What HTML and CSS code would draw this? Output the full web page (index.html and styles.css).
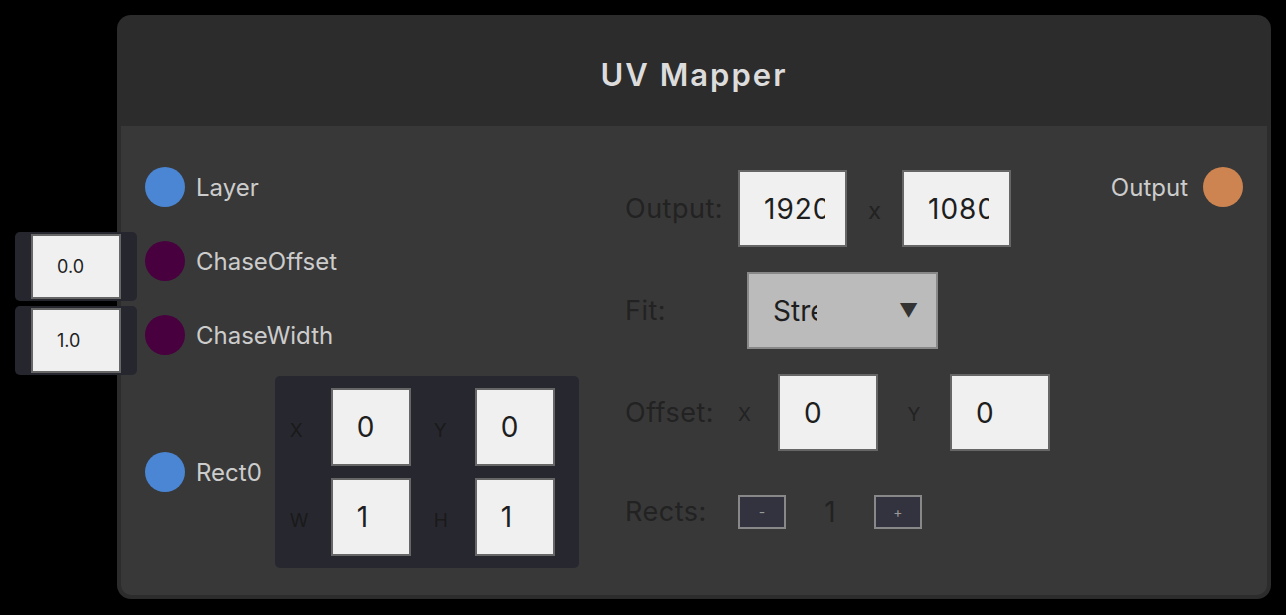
FILE: index.html
```html
<!DOCTYPE html>
<html>
<head>
<meta charset="utf-8">
<link rel="stylesheet" href="styles.css">
</head>
<body>
<div class="node">
  <div class="header"><span class="title">UV Mapper</span></div>
  <div class="nbody">
    <div class="ports">
      <div class="port"><span class="dot blue"></span><span class="plabel">Layer</span></div>
      <div class="port"><span class="dot purple"></span><span class="plabel">ChaseOffset</span></div>
      <div class="port"><span class="dot purple"></span><span class="plabel">ChaseWidth</span></div>
      <div class="port rectrow">
        <span class="dot blue"></span><span class="plabel">Rect0</span>
        <div class="rectgrid">
          <span class="glabel">X</span><div class="field gfield"><span class="val">0</span></div>
          <span class="glabel g2">Y</span><div class="field gfield"><span class="val">0</span></div>
          <span class="glabel">W</span><div class="field gfield"><span class="val">1</span></div>
          <span class="glabel g2">H</span><div class="field gfield"><span class="val">1</span></div>
        </div>
      </div>
    </div>
    <div class="controls">
      <div class="crow">
        <span class="clabel">Output:</span>
        <div class="field wide"><span class="val">1920</span></div>
        <span class="times">x</span>
        <div class="field wide"><span class="val">1080</span></div>
      </div>
      <div class="crow">
        <span class="clabel">Fit:</span>
        <div class="select"><span class="stext">Stretch</span><span class="arrow">▼</span></div>
      </div>
      <div class="crow">
        <span class="clabel">Offset:</span>
        <span class="axis axx">X</span>
        <div class="field mid"><span class="val">0</span></div>
        <span class="axis axy">Y</span>
        <div class="field mid"><span class="val">0</span></div>
      </div>
      <div class="crow rects">
        <span class="clabel">Rects:</span>
        <span class="btn">-</span>
        <span class="count">1</span>
        <span class="btn">+</span>
      </div>
    </div>
    <div class="outs">
      <div class="port outport"><span class="plabel">Output</span><span class="dot orange"></span></div>
    </div>
  </div>
  <div class="side s1"><div class="field small"><span class="val">0.0</span></div></div>
  <div class="side s2"><div class="field small"><span class="val">1.0</span></div></div>
</div>
</body>
</html>
```
FILE: styles.css
```css
html, body {
  margin: 0;
  padding: 0;
  background: #000;
  font-family: Inter, "Noto Sans", sans-serif;
}
body {
  padding: 15px 0 0 117px;
  height: 615px;
  box-sizing: border-box;
}
.node {
  position: relative;
  width: 1154px;
  height: 584px;
  box-sizing: border-box;
  background: #2c2c2c;
  border-radius: 14px;
  padding: 0 4px 4px 4px;
  display: flex;
  flex-direction: column;
}
.header {
  flex: none;
  height: 111px;
  display: flex;
  align-items: center;
  justify-content: center;
  padding-top: 8px;
  box-sizing: border-box;
}
.title {
  color: #dcdcdc;
  font-size: 31px;
  font-weight: 600;
  letter-spacing: 2px;
}
.nbody {
  flex: 1;
  min-height: 0;
  background: #383838;
  border-radius: 0 0 10px 10px;
  display: grid;
  grid-template-columns: 480px 1fr auto;
  align-items: start;
  padding: 41px 24px 0 24px;
}
.ports {
  display: flex;
  flex-direction: column;
}
.port {
  display: flex;
  align-items: center;
  height: 40px;
  margin-bottom: 34px;
}
.dot {
  width: 40px;
  height: 40px;
  border-radius: 50%;
  flex: none;
}
.blue { background: #4a86d4; }
.purple { background: #48003f; }
.orange { background: #cd8450; }
.plabel {
  color: #cccccc;
  font-size: 24px;
  margin-left: 11px;
}
.rectrow {
  height: 192px;
  margin-top: -13px;
}
.rectgrid {
  margin-left: 13px;
  background: #27272f;
  border-radius: 5px;
  display: grid;
  grid-template-columns: 41px 80px 64px 80px;
  grid-template-rows: 78px 78px;
  row-gap: 12px;
  padding: 12px 24px 12px 15px;
  align-items: center;
}
.glabel {
  color: #1a1a1a;
  font-size: 19px;
  padding-top: 6px;
}
.g2 { padding-left: 23px; }
.field {
  box-sizing: border-box;
  background: #f0f0f0;
  border: 2px solid #666;
  color: #1e1e1e;
  font-size: 28px;
  letter-spacing: 1px;
  padding: 0 20px 0 24px;
  display: flex;
  align-items: center;
}
.val {
  display: block;
  overflow: hidden;
  white-space: nowrap;
  flex: 1;
}
.gfield {
  width: 80px;
  height: 78px;
}
.controls {
  display: flex;
  flex-direction: column;
  padding-top: 3px;
}
.crow {
  display: flex;
  align-items: center;
  height: 77px;
  margin-bottom: 25px;
}
.clabel {
  width: 113px;
  flex: none;
  color: #222;
  font-size: 27px;
  letter-spacing: 0.5px;
}
.wide {
  width: 109px;
  height: 77px;
}
.times {
  width: 55px;
  text-align: center;
  color: #222;
  font-size: 24px;
  padding-top: 4px;
}
.select {
  box-sizing: border-box;
  margin-left: 9px;
  width: 191px;
  height: 77px;
  background: #bbbbbb;
  border: 2px solid #888;
  display: flex;
  align-items: center;
  padding-left: 24px;
  color: #1e1e1e;
  font-size: 28px;
}
.stext {
  width: 44px;
  overflow: hidden;
  white-space: nowrap;
}
.arrow {
  margin-left: 82px;
  font-size: 19px;
  color: #333;
}
.axis {
  color: #222;
  font-size: 19px;
  padding-top: 4px;
}
.axx { width: 40px; }
.axy { width: 72px; text-align: center; }
.mid {
  width: 100px;
  height: 77px;
}
.rects {
  margin-top: -3px;
}
.btn {
  box-sizing: border-box;
  width: 48px;
  height: 34px;
  background: #33333f;
  border: 2px solid #888;
  color: #999;
  font-size: 14px;
  display: flex;
  align-items: center;
  justify-content: center;
}
.count {
  width: 88px;
  text-align: center;
  color: #222;
  font-size: 28px;
}
.outs {
  display: flex;
  flex-direction: column;
}
.outport .plabel {
  margin-left: 0;
  margin-right: 15px;
}
.side {
  position: absolute;
  left: -102px;
  width: 122px;
  height: 69px;
  box-sizing: border-box;
  background: #26262e;
  border-radius: 5px;
  padding: 2px 16px;
}
.s1 { top: 217px; }
.s2 { top: 291px; }
.small {
  width: 90px;
  height: 65px;
  font-size: 18px;
  letter-spacing: 0;
  padding-right: 10px;
}
```
